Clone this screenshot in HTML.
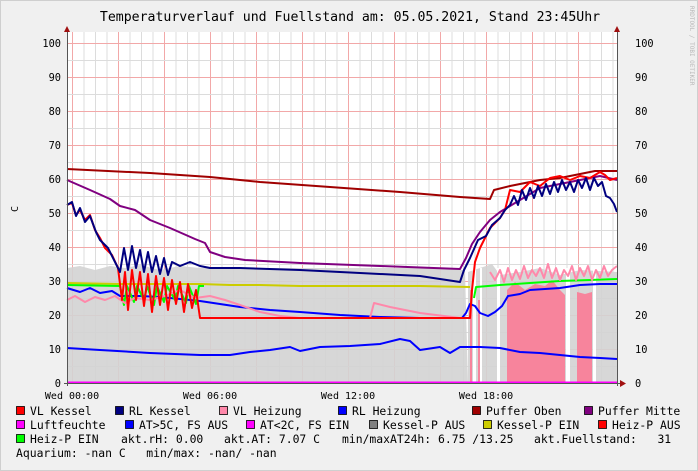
<!DOCTYPE html>
<html><head><meta charset="utf-8"><style>
html,body{margin:0;padding:0;background:#f0f0f0;}
svg{display:block;}
text{font-family:"DejaVu Sans Mono","Liberation Mono",monospace;fill:#000;white-space:pre;}
</style></head><body>
<svg width="698" height="471" viewBox="0 0 698 471" xmlns="http://www.w3.org/2000/svg" xml:space="preserve">
<defs>
<pattern id="gv" patternUnits="userSpaceOnUse" x="72" y="0" width="46" height="471">
<line x1="0.5" y1="0" x2="0.5" y2="471" stroke="#f2a8a8" stroke-width="1"/>
<line x1="12" y1="0" x2="12" y2="471" stroke="#dcdcdc"/>
<line x1="23.5" y1="0" x2="23.5" y2="471" stroke="#dcdcdc"/>
<line x1="35" y1="0" x2="35" y2="471" stroke="#dcdcdc"/>
</pattern>
<pattern id="gh" patternUnits="userSpaceOnUse" x="0" y="43" width="698" height="34">
<line x1="0" y1="0.5" x2="698" y2="0.5" stroke="#f2a8a8"/>
<line x1="0" y1="17.5" x2="698" y2="17.5" stroke="#dcdcdc"/>
</pattern>
</defs>
<rect x="0.5" y="0.5" width="697" height="470" fill="#f0f0f0" stroke="#cfcfcf"/>
<text x="350" y="21" font-size="13.2" text-anchor="middle">Temperaturverlauf und Fuellstand am: 05.05.2021, Stand 23:45Uhr</text>
<text transform="translate(690,6) rotate(90)" font-size="6" style="fill:#b8b8b8">RRDTOOL / TOBI OETIKER</text>
<text transform="translate(18,212) rotate(-90)" font-size="10">C</text>
<rect x="67" y="32" width="550" height="351" fill="#fff"/>
<rect x="67" y="32" width="550" height="351" fill="url(#gv)"/>
<rect x="67" y="32" width="550" height="351" fill="url(#gh)"/>
<polygon fill="#d3d3d3" fill-opacity="0.9" points="67,383 67,268 80,266 95,270 110,266 125,268 140,265 160,270 180,266 200,268 240,268 300,268 360,268 420,268 465,270 468,383"/>
<polygon fill="#d3d3d3" fill-opacity="0.9" points="468,383 468,272 480,268 492,264 500,275 520,272 540,268 560,275 580,270 617,272 617,383"/>
<rect x="473" y="268" width="3" height="115" fill="#fff"/>
<rect x="480" y="268" width="2" height="115" fill="#fff"/>
<rect x="497" y="268" width="3" height="115" fill="#fff"/>
<rect x="566" y="268" width="4" height="115" fill="#fff"/>
<rect x="593" y="268" width="3" height="115" fill="#fff"/>
<polygon fill="#f7849c" points="507,383 507,290 515,282 525,290 535,284 545,286 552,280 560,290 565,295 565,383"/>
<polygon fill="#f7849c" points="577,383 577,292 585,294 592,292 592,383"/>
<rect x="478" y="300" width="2" height="83" fill="#f7849c"/>
<rect x="470" y="290" width="2" height="93" fill="#f7849c"/>
<g fill="none" stroke-width="2" stroke-linejoin="round">
<polyline stroke="#a00000" points="67,169 150,173 210,177 260,182 330,187 400,192 460,197 490,199 494,190 510,186 540,180 560,178 580,174 595,171 617,171"/>
<polyline stroke="#800080" points="67,180 90,190 110,199 120,206 135,210 150,220 170,228 195,239 205,243 210,252 225,257 245,260 300,263 380,266 460,269 466,258 472,244 480,232 490,220 500,212 520,200 540,188 560,184 580,180 600,176 617,180"/>
<polyline stroke="#0000ff" points="67,288 80,292 90,288 100,293 112,291 120,296 140,296 160,297 180,299 200,301 220,304 240,307 270,310 300,312 340,315 380,317 420,318 462,318 466,313 470,304 475,306 480,313 488,316 495,312 502,306 508,296 520,294 530,290 545,289 560,288 580,285 600,284 617,284"/>
<polyline stroke="#0000ff" points="67,348 100,350 150,353 200,355 230,355 250,352 270,350 290,347 300,351 320,347 350,346 380,344 400,339 410,341 420,350 440,347 450,353 460,347 480,347 500,348 520,352 540,353 560,355 580,357 600,358 617,359"/>
<polyline stroke="#cccc00" points="67,283 120,284 200,284 230,285 260,285 300,286 360,286 420,286 470,287"/>
<polyline stroke="#00ff00" points="67,285 120,286 124,305 127,286 134,302 137,286 144,300 147,286 154,305 157,286 164,302 167,286 175,300 178,286 186,303 189,286 196,304 199,286 204,286"/>
<polyline stroke="#00ff00" points="474,298 476,287 500,285 530,283 560,281 590,280 617,279"/>
<polyline stroke="#ff88aa" points="67,300 75,296 85,302 95,297 105,300 115,296 125,303 135,298 150,300 165,296 180,290 195,298 210,296 225,300 240,305 260,312 280,316 300,318 330,318 370,318 374,303 390,307 420,313 460,318"/>
<polyline stroke="#ff88aa" points="490,272 495,280 500,270 504,282 508,268 512,280 516,270 520,279 524,266 528,278 532,270 536,276 540,268 544,278 548,264 552,278 556,268 560,280 564,270 568,276 572,266 576,280 580,268 584,276 588,266 592,280 596,270 600,278 604,266 608,276 612,270 617,266"/>
<polyline stroke="#ff0000" points="67,205 72,203 76,215 80,210 85,220 90,215 95,230 100,238 105,248 112,255 118,268 122,300 125,272 128,310 132,270 136,300 140,272 144,306 148,274 152,312 156,276 160,305 164,278 168,310 172,280 176,304 180,282 184,312 188,284 192,308 196,290 200,318 205,318 230,318 300,318 380,318 470,318 472,290 475,262 480,248 485,238 490,228 500,218 505,210 510,190 520,192 530,182 540,186 550,178 560,176 570,180 580,176 590,178 600,172 605,175 610,180 617,178"/>
<polyline stroke="#000080" points="67,205 72,202 76,216 80,208 85,222 90,216 96,232 100,240 108,248 115,262 120,272 124,248 128,270 132,246 136,268 140,250 144,272 148,252 152,272 156,256 160,274 164,258 168,275 172,262 180,266 190,262 200,266 210,268 240,268 300,270 360,273 420,276 460,282 464,270 470,258 478,240 486,236 492,225 500,218 505,210 510,205 514,196 518,205 522,190 526,200 530,188 534,198 538,186 542,196 546,184 550,194 554,182 558,192 562,180 566,190 570,182 574,192 578,180 582,188 586,178 590,190 594,178 598,186 602,182 606,196 610,198 614,204 617,212"/>
<line x1="67" y1="382.5" x2="617" y2="382.5" stroke="#ff00ff" stroke-width="2"/>
</g>
<line x1="67.5" y1="30" x2="67.5" y2="386" stroke="#555"/>
<line x1="617.5" y1="30" x2="617.5" y2="386" stroke="#555"/>
<line x1="64" y1="383.5" x2="620" y2="383.5" stroke="#555"/>
<polygon points="64,32 70,32 67,26" fill="#a01010"/>
<polygon points="614,32 620,32 617,26" fill="#a01010"/>
<polygon points="620,380 620,387 626,383.5" fill="#a01010"/>
<g font-size="10.3">
<g text-anchor="end">
<text x="61" y="47">100</text><text x="61" y="81">90</text><text x="61" y="115">80</text><text x="61" y="149">70</text><text x="61" y="183">60</text><text x="61" y="217">50</text><text x="61" y="251">40</text><text x="61" y="285">30</text><text x="61" y="319">20</text><text x="61" y="353">10</text><text x="61" y="387">0</text>
</g>
<text x="635" y="47">100</text><text x="635" y="81">90</text><text x="635" y="115">80</text><text x="635" y="149">70</text><text x="635" y="183">60</text><text x="635" y="217">50</text><text x="635" y="251">40</text><text x="635" y="285">30</text><text x="635" y="319">20</text><text x="635" y="353">10</text><text x="635" y="387">0</text>
</g>
<g font-size="10" text-anchor="middle">
<text x="72" y="399">Wed 00:00</text><text x="210" y="399">Wed 06:00</text><text x="348" y="399">Wed 12:00</text><text x="486" y="399">Wed 18:00</text>
</g>
<g stroke="#000" stroke-width="0.8">
<rect x="16.5" y="406.5" width="8" height="8" fill="#ff0000"/>
<rect x="115.5" y="406.5" width="8" height="8" fill="#000080"/>
<rect x="219.5" y="406.5" width="8" height="8" fill="#ff88aa"/>
<rect x="338.5" y="406.5" width="8" height="8" fill="#0000ff"/>
<rect x="472.5" y="406.5" width="8" height="8" fill="#a00000"/>
<rect x="584.5" y="406.5" width="8" height="8" fill="#800080"/>
<rect x="16.5" y="420.5" width="8" height="8" fill="#ff00ff"/>
<rect x="125.5" y="420.5" width="8" height="8" fill="#0000ff"/>
<rect x="246.5" y="420.5" width="8" height="8" fill="#ff00ff"/>
<rect x="369.5" y="420.5" width="8" height="8" fill="#808080"/>
<rect x="483.5" y="420.5" width="8" height="8" fill="#cccc00"/>
<rect x="598.5" y="420.5" width="8" height="8" fill="#ff0000"/>
<rect x="16.5" y="434.5" width="8" height="8" fill="#00ff00"/>
</g>
<g font-size="11.4">
<text x="30" y="415">VL Kessel</text>
<text x="129" y="415">RL Kessel</text>
<text x="233" y="415">VL Heizung</text>
<text x="352" y="415">RL Heizung</text>
<text x="486" y="415">Puffer Oben</text>
<text x="598" y="415">Puffer Mitte</text>
<text x="30" y="429">Luftfeuchte</text>
<text x="139" y="429">AT&gt;5C, FS AUS</text>
<text x="260" y="429">AT&lt;2C, FS EIN</text>
<text x="383" y="429">Kessel-P AUS</text>
<text x="497" y="429">Kessel-P EIN</text>
<text x="612" y="429">Heiz-P AUS</text>
<text x="30" y="443">Heiz-P EIN</text>
<text x="121" y="443">akt.rH: 0.00</text>
<text x="224" y="443">akt.AT: 7.07 C</text>
<text x="342" y="443">min/maxAT24h: 6.75 /13.25</text>
<text x="534" y="443">akt.Fuellstand:   31</text>
<text x="16" y="457">Aquarium: -nan C   min/max: -nan/ -nan</text>
</g>
</svg>
</body></html>
